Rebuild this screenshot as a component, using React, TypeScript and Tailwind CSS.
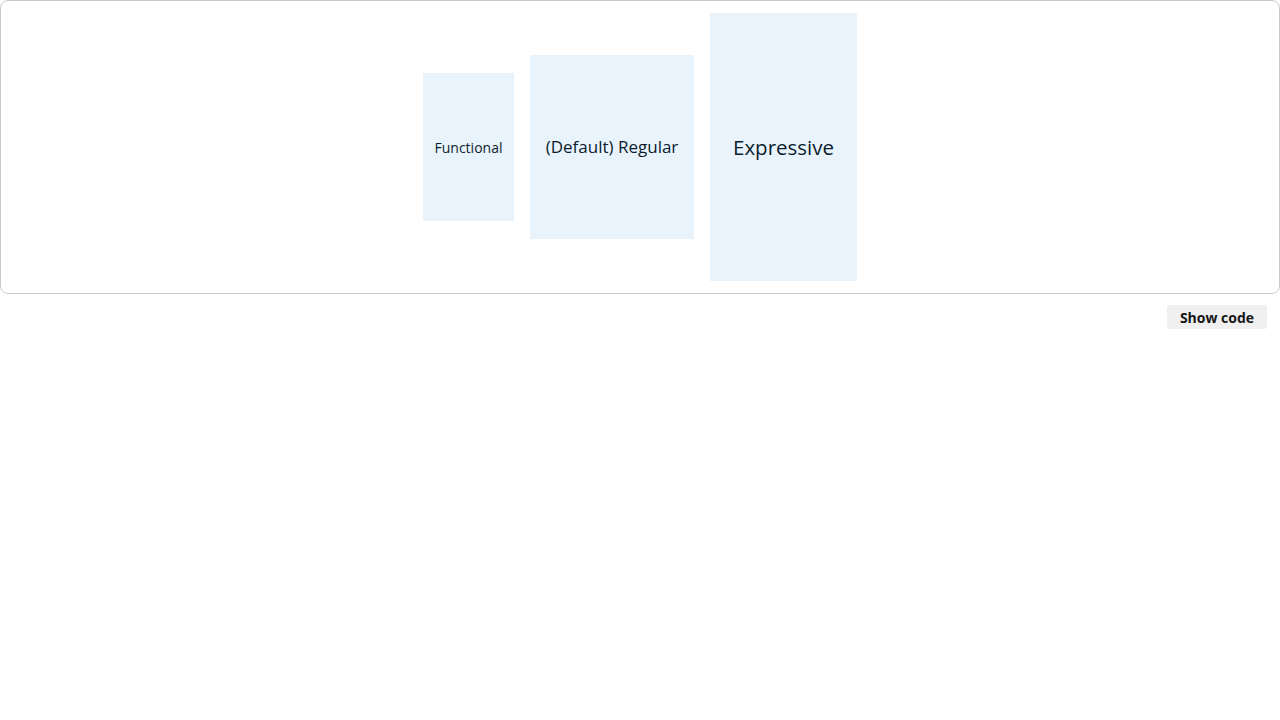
const boxes = [
  { label: "Functional", box: "w-[91px] h-[148px]", text: "text-[14px]" },
  { label: "(Default) Regular", box: "w-[164px] h-[184px]", text: "text-[17px]" },
  { label: "Expressive", box: "w-[147px] h-[268px]", text: "text-[20.5px]" },
];

export default function App() {
  return (
    <div className="min-h-screen bg-white font-['Open_Sans',sans-serif] text-[#0b1d2c]">
      <div className="h-[294px] border border-[#c8c8c8] rounded-[8px] flex items-center justify-center gap-4">
        {boxes.map((b) => (
          <div
            key={b.label}
            className={`${b.box} bg-[#e9f3fc] flex items-center justify-center whitespace-nowrap`}>
            <span className={b.text}>{b.label}</span>
          </div>
        ))}
      </div>
      <div className="flex justify-end pr-[13px] pt-[11px]">
        <button className="h-6 w-[100px] rounded-[3px] bg-[#f0f0f0] text-[14px] font-bold text-[#161616]">
          Show code
        </button>
      </div>
    </div>
  );
}
